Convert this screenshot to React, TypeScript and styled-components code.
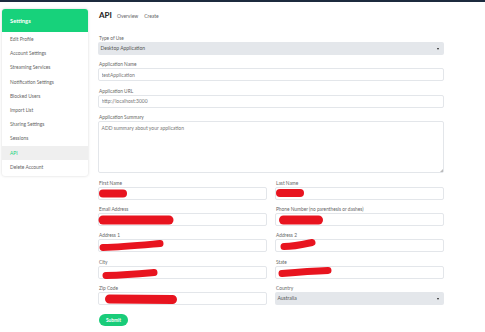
import React from 'react'
import styled, { createGlobalStyle } from 'styled-components'

const GlobalStyle = createGlobalStyle`
    html, body {
        margin: 0;
        padding: 0;
        background: #ffffff;
        font-family: Lato, "Open Sans", "Liberation Sans", sans-serif;
        color: #555;
    }
`

const menu = [
    'Edit Profile',
    'Account Settings',
    'Streaming Services',
    'Notification Settings',
    'Blocked Users',
    'Import List',
    'Sharing Settings',
    'Sessions',
    'API',
    'Delete Account',
]

// redaction scribbles, in coords relative to the input box
type Mark = { d: string; w: number }

const fields: { label: string; mark: Mark }[] = [
    { label: 'First Name', mark: { d: 'M5 6.5 L25 6.5', w: 8 } },
    { label: 'Last Name', mark: { d: 'M5 6 L25 6', w: 8 } },
    { label: 'Email Address', mark: { d: 'M5 7 L71 7', w: 9 } },
    { label: 'Phone Number (no parenthesis or dashes)', mark: { d: 'M8.5 7 L43.5 7', w: 9 } },
    { label: 'Address 1', mark: { d: 'M5 8.5 C25 8 45 6 62 4.5', w: 7 } },
    { label: 'Address 2', mark: { d: 'M9 7.5 C20 7.5 30 5 37 3.5', w: 7 } },
    { label: 'City', mark: { d: 'M8 9.5 C30 9 45 7.5 56 6.5', w: 7 } },
    { label: 'State', mark: { d: 'M7 7.5 C25 6 40 5 53 4.5', w: 7 } },
    { label: 'Zip Code', mark: { d: 'M11.5 7 L74.5 7.5', w: 9 } },
]

const App: React.FC = () => {
    return (
        <>
            <GlobalStyle />
            <TopBar />
            <Layout>
                <Sidebar>
                    <SidebarHead>Settings</SidebarHead>
                    {menu.map((m) => (
                        <MenuItem key={m} $active={m === 'API'}>
                            {m}
                        </MenuItem>
                    ))}
                </Sidebar>
                <Main>
                    <Header>
                        <PageTitle>API</PageTitle>
                        <Tab>Overview</Tab>
                        <Tab>Create</Tab>
                    </Header>

                    <Group>
                        <Label>Type of Use</Label>
                        <Select>
                            Desktop Application
                            <Caret />
                        </Select>
                    </Group>
                    <Group>
                        <Label>Application Name</Label>
                        <Input readOnly value="testApplication" />
                    </Group>
                    <Group>
                        <Label>Application URL</Label>
                        <Input readOnly value="http://localhost:3000" />
                    </Group>
                    <Group>
                        <Label>Application Summary</Label>
                        <Field>
                            <TextArea readOnly value="ADD summary about your application" />
                            <Grip />
                        </Field>
                    </Group>

                    <Grid>
                        {fields.map((f) => (
                            <Group key={f.label}>
                                <Label>{f.label}</Label>
                                <Field>
                                    <Input readOnly value="" />
                                    <Scribble>
                                        <path d={f.mark.d} stroke="#e8141f" strokeWidth={f.mark.w} strokeLinecap="round" fill="none" />
                                    </Scribble>
                                </Field>
                            </Group>
                        ))}
                        <Group>
                            <Label>Country</Label>
                            <Select>
                                Australia
                                <Caret />
                            </Select>
                        </Group>
                    </Grid>

                    <Submit>Submit</Submit>
                </Main>
            </Layout>
        </>
    )
}

const TopBar = styled.div`
    height: 2px;
    background: #1c2a3e;
`
const Layout = styled.div`
    display: flex;
    align-items: flex-start;
    padding: 7px 0 0 2px;
`
const Sidebar = styled.div`
    width: 86px;
    background: #fff;
    border-radius: 3px;
    overflow: hidden;
    box-shadow: 0 0 3px rgba(0, 0, 0, 0.16);
    padding-bottom: 2px;
`
const SidebarHead = styled.div`
    height: 23px;
    line-height: 23px;
    padding-left: 8px;
    background: #17d27b;
    color: #fff;
    font-size: 5.8px;
    font-weight: bold;
`
const MenuItem = styled.div<{ $active?: boolean }>`
    height: 14.2px;
    line-height: 14.2px;
    padding-left: 8px;
    font-size: 4.9px;
    color: ${(p) => (p.$active ? '#17d27b' : '#666')};
    background: ${(p) => (p.$active ? '#efefef' : 'transparent')};
`
const Main = styled.div`
    width: 346px;
    margin-left: 10px;
`
const Header = styled.div`
    display: flex;
    align-items: baseline;
    height: 12px;
    line-height: 12px;
    margin-bottom: 14px;
    padding-left: 1px;
`
const PageTitle = styled.div`
    font-size: 8px;
    font-weight: bold;
    color: #222;
    margin-right: 5px;
`
const Tab = styled.div`
    font-size: 5px;
    color: #666;
    margin-right: 6px;
`
const Group = styled.div`
    margin-bottom: 6.4px;
`
const Label = styled.div`
    height: 7px;
    font-size: 4.8px;
    line-height: 7px;
    color: #666;
    padding-left: 1px;
    white-space: nowrap;
`
const Input = styled.input`
    display: block;
    box-sizing: border-box;
    width: 100%;
    height: 13px;
    margin: 0;
    padding: 0 2.5px;
    border: 1px solid #e3e6ea;
    border-radius: 2px;
    background: #fff;
    font-family: inherit;
    font-size: 5px;
    color: #777;
    outline: none;
`
const TextArea = styled.textarea`
    display: block;
    box-sizing: border-box;
    width: 100%;
    height: 52px;
    margin: 0;
    padding: 3px 2.5px;
    border: 1px solid #e3e6ea;
    border-radius: 2px;
    font-family: inherit;
    font-size: 5px;
    color: #777;
    outline: none;
    resize: none;
`
const Grip = styled.span`
    position: absolute;
    right: 1.5px;
    bottom: 1.5px;
    width: 0;
    height: 0;
    border-left: 3px solid transparent;
    border-bottom: 3px solid #bbb;
`
const Select = styled.div`
    position: relative;
    box-sizing: border-box;
    height: 13px;
    line-height: 13px;
    padding: 0 2.5px;
    background: #e4e7eb;
    border-radius: 2px;
    font-size: 5px;
    color: #555;
`
const Caret = styled.span`
    position: absolute;
    right: 5px;
    top: 5.5px;
    width: 0;
    height: 0;
    border-left: 1.5px solid transparent;
    border-right: 1.5px solid transparent;
    border-top: 2px solid #222;
`
const Grid = styled.div`
    display: grid;
    grid-template-columns: 1fr 1fr;
    column-gap: 8px;
`
const Field = styled.div`
    position: relative;
`
const Scribble = styled.svg`
    position: absolute;
    left: 0;
    top: 0;
    width: 100%;
    height: 13px;
    overflow: visible;
    pointer-events: none;
`
const Submit = styled.button`
    display: block;
    margin: 2px 0 0 1px;
    width: 29px;
    height: 12px;
    padding: 0;
    border: none;
    border-radius: 6px;
    background: #19cc79;
    color: #fff;
    font-family: inherit;
    font-size: 4.8px;
    font-weight: bold;
`

export default App
